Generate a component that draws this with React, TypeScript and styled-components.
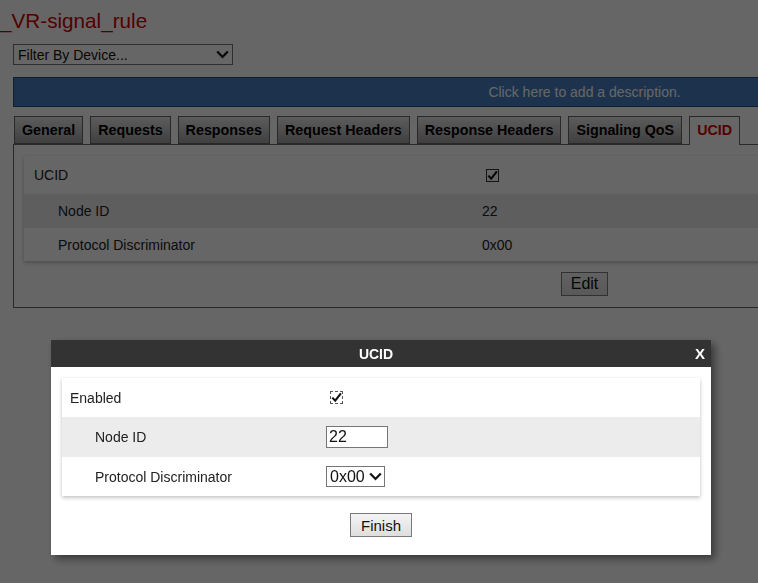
import React from 'react';
import styled, { createGlobalStyle } from 'styled-components';

const GlobalStyle = createGlobalStyle`
  html, body {
    margin: 0;
    padding: 0;
    background: #ffffff;
    overflow: hidden;
  }
  body {
    font-family: "Liberation Sans", Arial, sans-serif;
    color: #222;
  }
`;

const Page = styled.div`
  width: 1170px;
`;

const Title = styled.h1`
  margin: 9px 0 0;
  font-size: 20.7px;
  line-height: 23px;
  font-weight: normal;
  color: #d00000;
`;

const Main = styled.div`
  margin-left: 13px;
  width: 1143px;
`;

const FilterSelect = styled.div`
  margin-top: 12px;
  box-sizing: border-box;
  width: 220px;
  height: 21px;
  border: 1px solid #767676;
  display: flex;
  align-items: center;
  justify-content: space-between;
  padding: 0 3px 0 4px;
  font-size: 14px;
  color: #111;
  background: #fff;
`;

const DescriptionBar = styled.div`
  margin-top: 12px;
  box-sizing: border-box;
  height: 30px;
  border: 1px solid #2c4f7a;
  background: #4a80c0;
  color: #ffffff;
  font-size: 14px;
  line-height: 28px;
  text-align: center;
`;

const Tabs = styled.div`
  margin-top: 9px;
  display: flex;
  gap: 7px;
`;

const Tab = styled.div<{ $active?: boolean }>`
  position: relative;
  z-index: 1;
  box-sizing: border-box;
  height: ${p => (p.$active ? '29px' : '28px')};
  margin-bottom: ${p => (p.$active ? '-1px' : '0')};
  padding: 0 7px;
  border: 1px solid #666;
  border-bottom: ${p => (p.$active ? 'none' : '1px solid #666')};
  background: ${p => (p.$active ? '#ffffff' : 'linear-gradient(#e6e6e6, #a0a0a0)')};
  color: ${p => (p.$active ? '#d00000' : '#000')};
  font-size: 14.3px;
  font-weight: bold;
  line-height: 27px;
  white-space: nowrap;

  &:first-child {
    margin-left: 1px;
  }
`;

const Panel = styled.div`
  border: 1px solid #666;
  padding: 11px 10px;
  display: flex;
  flex-direction: column;
  align-items: center;
`;

const Card = styled.div`
  align-self: stretch;
  background: #fff;
  box-shadow: 0 2px 4px rgba(0, 0, 0, 0.22), 0 0 2px rgba(0, 0, 0, 0.06);
`;

const Row = styled.div<{ $h: number; $label: number; $shaded?: boolean }>`
  display: grid;
  grid-template-columns: ${p => p.$label}px 1fr;
  align-items: center;
  height: ${p => p.$h}px;
  background: ${p => (p.$shaded ? '#ececec' : 'transparent')};
  font-size: 14px;
`;

const Label = styled.div<{ $indent: number }>`
  padding-left: ${p => p.$indent}px;
`;

const Value = styled.div`
  display: flex;
  align-items: center;
`;

const CheckBox = styled.div<{ $focus?: boolean }>`
  box-sizing: border-box;
  width: 13px;
  height: 13px;
  margin-left: 4px;
  border: 1px ${p => (p.$focus ? 'dashed #555' : 'solid #333')};
  display: flex;
  align-items: center;
  justify-content: center;
  background: #fff;
`;

const Button = styled.button`
  box-sizing: border-box;
  height: 24px;
  padding: 0 10px;
  border: 1px solid #7a7a7a;
  border-radius: 0;
  background: linear-gradient(#f4f4f4, #dedede);
  font-family: "Liberation Sans", Arial, sans-serif;
  font-size: 15px;
  color: #111;
`;

const EditButton = styled(Button)`
  margin-top: 11px;
  font-size: 16px;
  padding: 0 9px;
`;

const Overlay = styled.div`
  position: fixed;
  inset: 0;
  z-index: 10;
  background: rgba(0, 0, 0, 0.6);
`;

const Modal = styled.div`
  position: fixed;
  z-index: 11;
  left: 51px;
  top: 340px;
  width: 660px;
  background: #fff;
  box-shadow: 4px 4px 8px rgba(0, 0, 0, 0.45);
`;

const ModalHeader = styled.div`
  display: flex;
  align-items: center;
  height: 27px;
  padding: 0 6px;
  background: #333;
  color: #fff;
  font-weight: bold;
`;

const ModalTitle = styled.div`
  flex: 1;
  text-align: center;
  font-size: 14px;
`;

const CloseX = styled.div`
  font-size: 15px;
`;

const ModalBody = styled.div`
  padding: 11px 11px 18px;
  display: flex;
  flex-direction: column;
  align-items: center;
`;

const FinishButton = styled(Button)`
  margin-top: 17px;
`;

const TextInput = styled.input`
  box-sizing: border-box;
  width: 62px;
  height: 22px;
  padding: 0 2px;
  border: 1px solid #767676;
  font-family: "Liberation Sans", Arial, sans-serif;
  font-size: 16px;
  color: #111;
  outline: none;
`;

const SmallSelect = styled.div`
  box-sizing: border-box;
  width: 59px;
  height: 21px;
  border: 1px solid #767676;
  display: flex;
  align-items: center;
  gap: 4px;
  padding-left: 3px;
  font-size: 16px;
  color: #111;
`;

const Chevron = () => (
  <svg width="13" height="9" viewBox="0 0 13 9">
    <path d="M1.2 1.5 L6.5 7 L11.8 1.5" fill="none" stroke="#111" strokeWidth="2.2" />
  </svg>
);

const Check = () => (
  <svg width="11" height="11" viewBox="0 0 11 11">
    <path d="M1.3 5.6 L4.2 8.7 L9.9 1.4" fill="none" stroke="#111" strokeWidth="2.1" />
  </svg>
);

const tabs = [
  'General',
  'Requests',
  'Responses',
  'Request Headers',
  'Response Headers',
  'Signaling QoS',
  'UCID',
];

export default function App() {
  return (
    <>
      <GlobalStyle />
      <Page>
        <Title>_VR-signal_rule</Title>
        <Main>
          <FilterSelect>
            <span>Filter By Device...</span>
            <Chevron />
          </FilterSelect>
          <DescriptionBar>Click here to add a description.</DescriptionBar>
          <Tabs>
            {tabs.map(t => (
              <Tab key={t} $active={t === 'UCID'}>
                {t}
              </Tab>
            ))}
          </Tabs>
          <Panel>
            <Card>
              <Row $h={38} $label={458}>
                <Label $indent={10}>UCID</Label>
                <Value>
                  <CheckBox>
                    <Check />
                  </CheckBox>
                </Value>
              </Row>
              <Row $h={34} $label={458} $shaded>
                <Label $indent={34}>Node ID</Label>
                <Value>22</Value>
              </Row>
              <Row $h={33} $label={458}>
                <Label $indent={34}>Protocol Discriminator</Label>
                <Value>0x00</Value>
              </Row>
            </Card>
            <EditButton type="button">Edit</EditButton>
          </Panel>
        </Main>
      </Page>

      <Overlay />

      <Modal>
        <ModalHeader>
          <ModalTitle>UCID</ModalTitle>
          <CloseX>X</CloseX>
        </ModalHeader>
        <ModalBody>
          <Card>
            <Row $h={39} $label={264}>
              <Label $indent={8}>Enabled</Label>
              <Value>
                <CheckBox $focus>
                  <Check />
                </CheckBox>
              </Value>
            </Row>
            <Row $h={40} $label={264} $shaded>
              <Label $indent={33}>Node ID</Label>
              <Value>
                <TextInput defaultValue="22" />
              </Value>
            </Row>
            <Row $h={39} $label={264}>
              <Label $indent={33}>Protocol Discriminator</Label>
              <Value>
                <SmallSelect>
                  <span>0x00</span>
                  <Chevron />
                </SmallSelect>
              </Value>
            </Row>
          </Card>
          <FinishButton type="button">Finish</FinishButton>
        </ModalBody>
      </Modal>
    </>
  );
}
